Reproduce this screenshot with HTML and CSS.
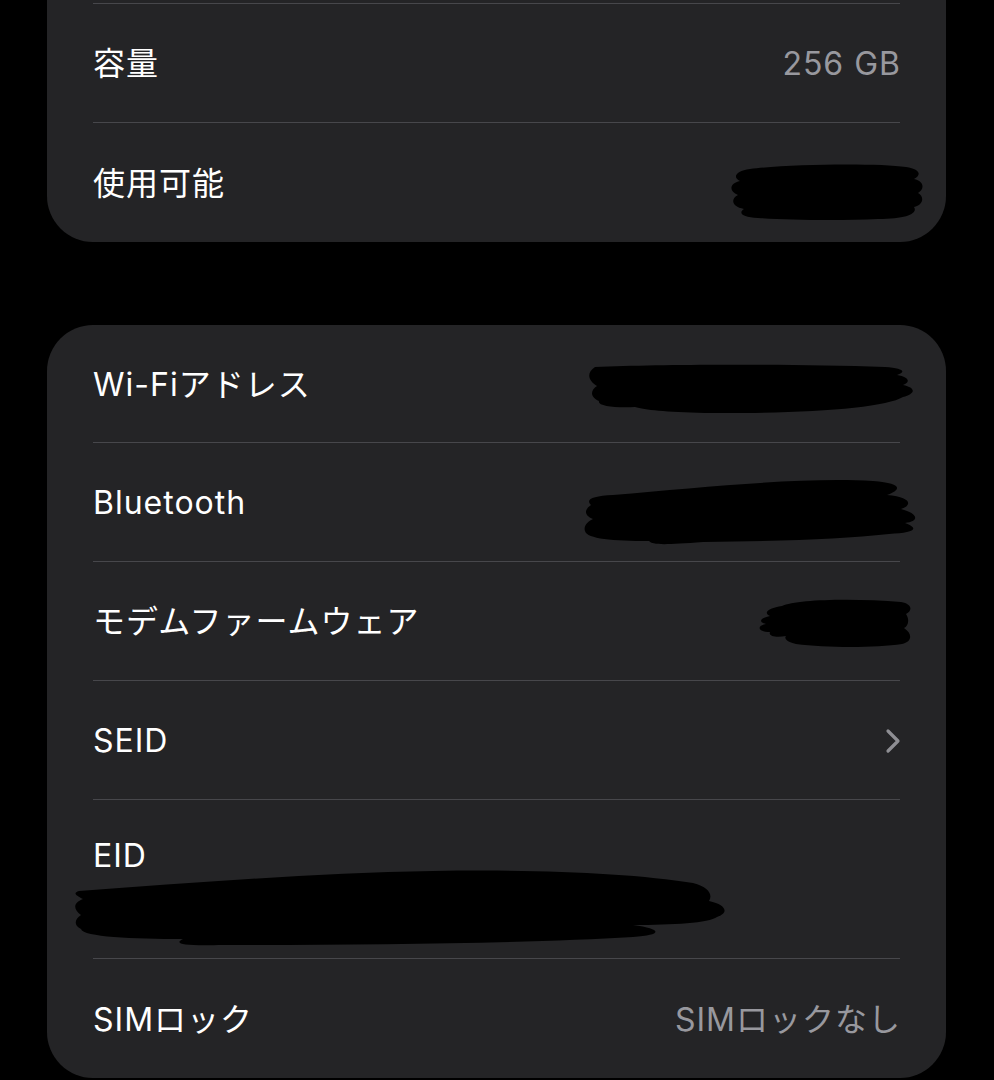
FILE: index.html
```html
<!DOCTYPE html>
<html lang="ja">
<head>
<meta charset="utf-8">
<title>情報</title>
<link rel="stylesheet" href="styles.css">
</head>
<body>
<div class="page">
  <section class="card card-top">
    <div class="row" aria-hidden="true"></div>
    <div class="row"><span class="label">容量</span><span class="value">256 GB</span></div>
    <div class="row last">
      <span class="label">使用可能</span>
      <svg class="redact r-avail" width="197" height="58" viewBox="0 0 197 58">
        <path d="M22 6 C60 1 150 0 178 4 C192 6 194 12 186 16 C196 18 197 26 190 30 C197 34 195 42 186 44 C190 50 180 56 150 56 C110 58 60 57 30 55 C14 54 10 50 16 46 C4 44 2 36 10 32 C0 28 2 20 12 18 C4 14 8 8 22 6 Z" fill="#000"/>
      </svg>
    </div>
  </section>

  <section class="card">
    <div class="row first">
      <span class="label">Wi-Fiアドレス</span>
      <svg class="redact r-wifi" width="332" height="50" viewBox="0 0 332 50">
        <path d="M10 3 C80 0 200 0 300 3 C318 4 322 8 312 11 C324 13 326 18 318 21 C332 24 330 30 318 33 C300 44 220 50 120 49 C80 48 60 46 50 43 C30 44 12 42 14 37 C4 32 6 26 12 22 C2 16 2 8 10 3 Z" fill="#000"/>
      </svg>
    </div>
    <div class="row">
      <span class="label">Bluetooth</span>
      <svg class="redact r-bt" width="336" height="66" viewBox="0 0 336 66">
        <path d="M30 16 C120 8 220 -2 290 2 C318 4 320 10 304 16 C328 18 330 26 318 30 C334 34 338 42 322 44 C338 50 330 54 306 55 C260 60 200 62 120 63 C80 66 70 66 66 62 C30 62 4 60 2 52 C0 46 6 42 10 40 C0 36 2 30 8 26 C2 20 10 17 30 16 Z" fill="#000"/>
      </svg>
    </div>
    <div class="row">
      <span class="label">モデムファームウェア</span>
      <svg class="redact r-modem" width="157" height="50" viewBox="0 0 157 50">
        <path d="M26 8 C40 1 100 0 145 4 C156 6 157 12 150 16 C154 22 152 28 148 30 C157 36 156 44 146 46 C120 50 70 50 40 46 C30 44 28 40 30 38 C20 40 12 38 14 34 C2 34 0 28 10 26 C2 24 4 20 14 18 C6 14 14 10 26 8 Z" fill="#000"/>
      </svg>
    </div>
    <div class="row">
      <span class="label">SEID</span>
      <svg class="chevron" width="16" height="26" viewBox="0 0 16 26">
        <path d="M3 3 L13 13 L3 23" fill="none" stroke="#8e8e93" stroke-width="3.2" stroke-linecap="round" stroke-linejoin="round"/>
      </svg>
    </div>
    <div class="row row-eid">
      <span class="label">EID</span>
      <svg class="redact r-eid" width="654" height="78" viewBox="0 0 654 78">
        <path d="M6 22 C120 14 240 4 360 2 C460 0 560 4 620 14 C636 18 640 26 636 32 C654 36 656 44 644 48 C636 54 600 56 560 56 C590 60 590 66 560 68 C460 74 300 76 150 76 C110 77 100 75 110 70 C60 70 10 68 8 60 C0 56 2 50 8 46 C0 40 0 34 10 30 C2 26 0 24 6 22 Z" fill="#000"/>
      </svg>
    </div>
    <div class="row last">
      <span class="label">SIMロック</span>
      <span class="value">SIMロックなし</span>
    </div>
  </section>
</div>
</body>
</html>
```

FILE: styles.css
```css
html, body {
  margin: 0;
  padding: 0;
  background: #000;
}

body {
  font-family: "Inter", "Noto Sans CJK JP", sans-serif;
  color: #fff;
  -webkit-font-smoothing: antialiased;
  overflow: hidden;
}

.page {
  display: flex;
  flex-direction: column;
  gap: 83px;
  margin-top: -115px;
}

.card {
  margin: 0 48px 0 47px;
  background: #242426;
  border-radius: 46px;
  display: flex;
  flex-direction: column;
}

.row {
  margin: 0 46px;
  height: 119px;
  border-bottom: 1px solid #47474b;
  display: flex;
  align-items: center;
  justify-content: space-between;
  font-size: 32px;
  letter-spacing: 1px;
  padding-top: 2px;
  box-sizing: border-box;
}

.row.first {
  height: 118px;
}

.row.last {
  border-bottom: none;
}

.label {
  color: #ffffff;
  line-height: 38px;
}

.value {
  color: #98989e;
  line-height: 38px;
  margin-right: -1px;
}

.redact {
  display: block;
  flex: none;
}

.r-avail {
  margin-right: -25px;
  margin-top: 16px;
}

.r-wifi {
  margin-right: -17px;
  margin-top: 8px;
}

.r-bt {
  margin-right: -19px;
  margin-top: 18px;
}

.r-modem {
  margin-right: -13px;
  margin-top: 2px;
}

.chevron {
  display: block;
  margin-right: -1px;
}

.row-eid {
  height: 159px;
  flex-direction: column;
  align-items: flex-start;
  justify-content: flex-start;
  padding-top: 37px;
}

.r-eid {
  margin-left: -20px;
  margin-top: -6px;
}
```
